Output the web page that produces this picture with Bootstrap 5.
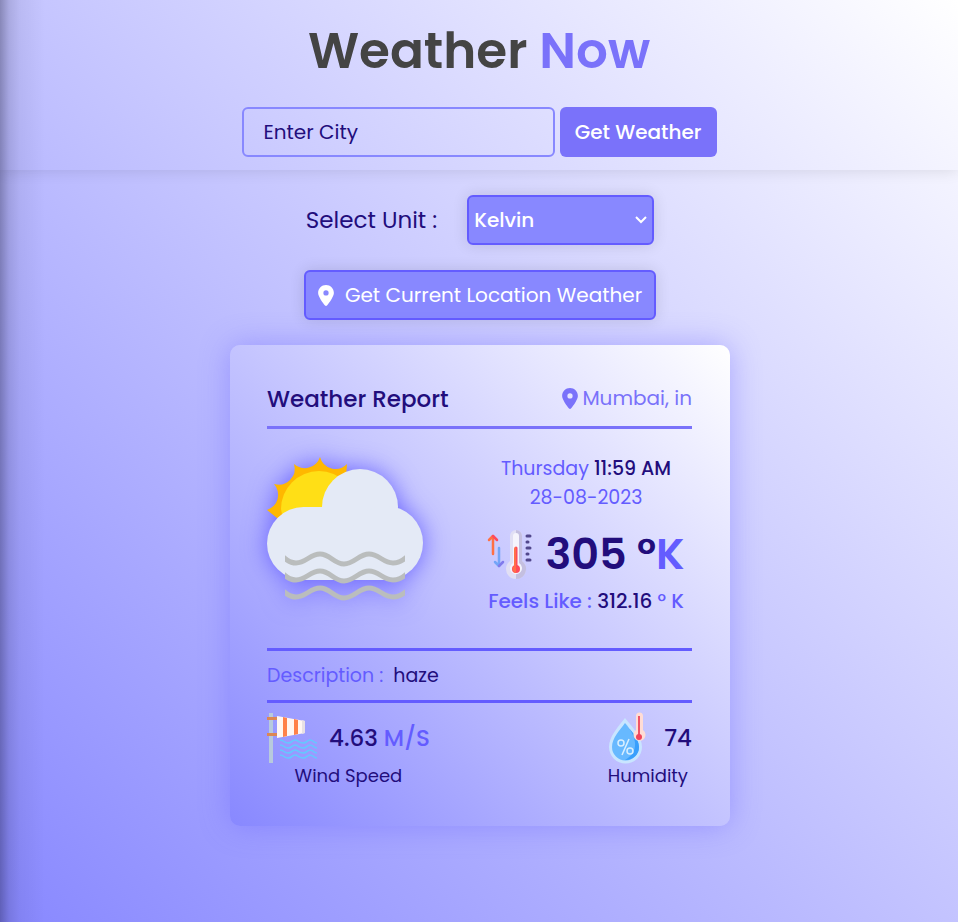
<!DOCTYPE html>
<html lang="en">
<head>
<meta charset="utf-8">
<meta name="viewport" content="width=device-width, initial-scale=1">
<title>Weather Now</title>
<link href="https://cdn.jsdelivr.net/npm/bootstrap@5.3.0/dist/css/bootstrap.min.css" rel="stylesheet">
<style>
  :root { --ink: #220d7c; --violet: #7a72fa; --strong: #645cff; --fill: #8888ff; }
  body {
    font-family: Poppins, Inter, "Open Sans", sans-serif;
    font-size: 20px;
    line-height: 30px;
    color: var(--ink);
    background: linear-gradient(to right, rgba(0, 0, 20, .3), rgba(0, 0, 20, .13) 9px, rgba(0, 0, 20, .05) 20px, transparent 45px), linear-gradient(to top right, #8888ff, #ffffff);
  }
  .site-head { padding: 13px 16px; box-shadow: 0 0 15px rgba(0, 0, 0, .12); clip-path: inset(0 0 -30px 0); }
  .brand-title { font-size: 50px; line-height: 76px; font-weight: 600; color: #444444; margin-bottom: 18px; }
  .tone-violet { color: var(--violet); }
  .tone-strong { color: var(--strong); }
  .tone-ink { color: var(--ink); }
  .weight-mid { font-weight: 500; }
  .search-row { max-width: 475px; gap: 5px; }
  .city-box, .city-box:focus { height: 50px; font-size: 20px; color: var(--ink); background: transparent; border: 2px solid var(--fill); border-radius: 6px; padding: 0 20px; }
  .city-box::placeholder { color: var(--ink); opacity: 1; }
  .go-btn { height: 50px; padding: 0 15px; font-size: 20px; font-weight: 500; color: #fff; background: var(--violet); border-radius: 6px; border: 0; }
  .unit-row { gap: 30px; }
  .unit-label { font-size: 23px; }
  .unit-pick { width: 187px; height: 50px; font-size: 20px; font-weight: 500; color: #fff; border: 2px solid var(--strong); border-radius: 6px; padding: 0 24px 0 5px;
    background: var(--fill) url("data:image/svg+xml,%3Csvg xmlns='http://www.w3.org/2000/svg' viewBox='0 0 12 8'%3E%3Cpath fill='none' stroke='white' stroke-width='2' d='M1 1l5 5 5-5'/%3E%3C/svg%3E") no-repeat right 5px center / 12px 8px;
    box-shadow: 0 0 15px rgba(0, 0, 0, .12); }
  .place-btn { height: 50px; padding: 0 12px; gap: 11px; font-size: 20px; color: #fff; background: var(--fill); border: 2px solid var(--strong); border-radius: 6px; box-shadow: 0 0 15px rgba(0, 0, 0, .12); }
  .main-stack { padding: 25px 16px 96px 18px; gap: 25px; }
  .report { max-width: 500px; padding: 38px 38px 38px 37px; border-radius: 10px; background: linear-gradient(to top right, #8888ff, #ffffff); box-shadow: 0 0 30px rgba(100, 92, 255, .4); }
  .report-top { height: 46px; border-bottom: 3px solid var(--violet); }
  .report-title { font-size: 23px; line-height: 32px; font-weight: 500; }
  .sky-row { height: 219px; padding-top: 25px; }
  .sky-art { filter: drop-shadow(0 0 12px rgba(90, 82, 255, .85)); margin-top: 3px; }
  .reading { width: 212px; }
  .day-text { font-size: 19px; line-height: 29px; }
  .degree-row { gap: 12px; margin: 12px 0 2px; height: 60px; }
  .degree { font-size: 43px; line-height: 60px; font-weight: 600; }
  .about-row { height: 55px; border-top: 3px solid var(--strong); border-bottom: 3px solid var(--strong); font-size: 19px; gap: 10px; }
  .stats-row { padding-top: 9px; }
  .stat-value { font-size: 23px; font-weight: 500; }
  .stat-name { font-size: 18px; line-height: 24px; }
</style>
<script src="https://cdn.jsdelivr.net/npm/bootstrap@5.3.0/dist/js/bootstrap.bundle.min.js" defer></script>
</head>
<body class="min-vh-100">
<header class="site-head">
  <h1 class="brand-title text-center">Weather <span class="tone-violet">Now</span></h1>
  <form class="search-row d-flex mx-auto">
    <input class="city-box form-control flex-fill" type="text" placeholder="Enter City" aria-label="Enter City">
    <button class="go-btn btn flex-shrink-0" type="button">Get Weather</button>
  </form>
</header>
<main class="main-stack d-flex flex-column align-items-center">
  <div class="unit-row d-flex align-items-center">
    <label class="unit-label" for="unit">Select Unit :</label>
    <select class="unit-pick form-select" id="unit"><option>Kelvin</option><option>Celsius</option><option>Fahrenheit</option></select>
  </div>
  <button class="place-btn btn d-flex align-items-center" type="button">
    <svg width="16" height="21" viewBox="0 0 384 512" fill="currentColor" aria-hidden="true"><path d="M215.700 499.200C267 435 384 279.400 384 192C384 86 298 0 192 0S0 86 0 192c0 87.400 117 243 168.300 307.200c12.300 15.300 35.100 15.300 47.400 0zM192 128a64 64 0 1 1 0 128 64 64 0 1 1 0-128z"/></svg>
    Get Current Location Weather
  </button>
  <section class="report w-100">
    <div class="report-top d-flex justify-content-between align-items-start">
      <h2 class="report-title mb-0">Weather Report</h2>
      <div class="tone-violet d-flex align-items-center gap-1">
        <svg width="16" height="21" viewBox="0 0 384 512" fill="currentColor" aria-hidden="true"><path d="M215.700 499.200C267 435 384 279.400 384 192C384 86 298 0 192 0S0 86 0 192c0 87.400 117 243 168.300 307.200c12.300 15.300 35.100 15.300 47.400 0zM192 128a64 64 0 1 1 0 128 64 64 0 1 1 0-128z"/></svg>
        <span>Mumbai, in</span>
      </div>
    </div>
    <div class="sky-row d-flex justify-content-between align-items-start">
      <svg class="sky-art overflow-visible" width="156" height="144" viewBox="17 17 156 144" aria-hidden="true">
        <path fill="#ffb800" d="M17 70A16 16 0 0 0 24 44A16 16 0 0 0 44 24A16 16 0 0 0 70 17A16 16 0 0 0 97 24L94 60 50 85 27 78Z"/>
        <path fill="#ffdf16" d="M107 69A38 38 0 0 0 31 69L33 80H107Z"/>
        <g fill="#e4eaf6"><circle cx="110" cy="67" r="38"/><path d="M53.500 67H137V140H53.500A36.500 36.500 0 0 1 53.500 67Z"/><circle cx="136" cy="103" r="37"/></g>
        <clipPath id="haze-edge"><path d="M35 100h120v70H35z"/></clipPath>
        <g fill="none" stroke="#babdbd" stroke-width="5" clip-path="url(#haze-edge)"><path id="wave" d="M31 115C36 120 40 123 46 123C56 123 60 114 70 114S84 124 94 124S109 114 119 114S133 123 143 123Q151 123 159 115"/><use href="#wave" y="17"/><use href="#wave" y="34"/></g>
      </svg>
      <div class="reading text-center">
        <div class="day-text tone-strong">Thursday <span class="tone-ink weight-mid">11:59 AM</span></div>
        <div class="day-text tone-strong">28-08-2023</div>
        <div class="degree-row d-flex align-items-center justify-content-center">
          <svg width="46" height="50" viewBox="0 0 46 50" aria-hidden="true">
            <g fill="none" stroke-width="2.500" stroke-linecap="round" stroke-linejoin="round"><path stroke="#ff7044" d="M6 25V8M2 11L6 7"/><path stroke="#ff4b5d" d="M6 7l4 4"/><path stroke="#73a5f8" d="M12 19v18M8 33l4 4"/><path stroke="#817bec" d="M12 37l4-4"/></g>
            <path fill="none" stroke="#51478c" stroke-width="3" stroke-linecap="round" d="M40 7h3M40 13h1M40 19h3M40 25h1M40 31h3"/>
            <path fill="#e1dff4" d="M23 7a6 6 0 0 1 12 0v25a10 10 0 1 1-12 0Z"/>
            <path fill="#c4bfe0" d="M29 1a6 6 0 0 1 6 6v25a10 10 0 0 1-6 18Z"/>
            <path fill="#f5f4fc" d="M26 7a3 3 0 0 1 6 0v27a6 6 0 1 1-6 0Z"/>
            <path stroke="#ff4b5b" stroke-width="3" stroke-linecap="round" d="M29 19v20"/><circle cx="29" cy="40" r="4" fill="#ff4a5b"/><path fill="#ff7048" d="M29 18q-2 0-2 2v17a4 4 0 0 0 2 7Z"/>
          </svg>
          <div class="degree text-nowrap">305 °<span class="tone-strong">K</span></div>
        </div>
        <div class="weight-mid text-nowrap tone-strong">Feels Like : <span class="tone-ink">312.16</span> ° K</div>
      </div>
    </div>
    <div class="about-row d-flex align-items-center"><span class="tone-strong">Description :</span><span>haze</span></div>
    <div class="stats-row d-flex justify-content-between">
      <div>
        <div class="d-flex align-items-center gap-2">
          <svg width="54" height="52" viewBox="0 0 54 52" aria-hidden="true">
            <path fill="#b8cadd" d="M2 1h4v50H2z"/><path fill="#dc8754" d="M0 5h10v3H0zM0 21h10v3H0z"/><path fill="#fff6f2" d="M10 4l28 5v12l-28 5z"/><path fill="#ff8149" d="M16 5l4 1v18l-4 1zM27 7l4 1v14l-4 1z"/><path fill="#e8e0e4" d="M35 8l3 1v12l-3 1z"/>
            <g fill="none" stroke="#62caff" stroke-width="1.500"><path id="ripple" d="M13 28c4 0 4 3 8 3s4-3 7-3 4 3 8 3 4-3 7-3 4 3 7 3"/><use href="#ripple" y="5"/><use href="#ripple" y="10"/><use href="#ripple" y="15"/></g>
          </svg>
          <div class="stat-value">4.63 <span class="tone-strong">M/S</span></div>
        </div>
        <div class="stat-name text-center">Wind Speed</div>
      </div>
      <div>
        <div class="d-flex align-items-center justify-content-between">
          <svg width="38" height="52" viewBox="0 0 38 52" aria-hidden="true">
            <path fill="#c9e5ff" d="M17 6C11 14 1 24 1 35a16 16 0 0 0 33 0C34 24 23 14 17 6Z"/><path fill="#67b9ff" d="M17 11C12 18 4 26 4 35a13 13 0 0 0 27 0C31 26 22 18 17 11Z"/><path fill="#399ffc" d="M17 11c5 7 14 15 14 24a13 13 0 0 1-14 13c14-8 13-22 0-37Z"/>
            <g fill="none" stroke="#d8efff" stroke-width="1.500"><path d="M21 27l-7 16"/><circle cx="13" cy="31" r="3"/><circle cx="22" cy="39" r="3"/></g>
            <path fill="#ffdcd5" d="M28 4a3 3 0 0 1 7 0v14a6 6 0 1 1-7 0Z"/><path stroke="#f05367" stroke-width="2" d="M31 4v20"/><circle cx="31" cy="25" r="3" fill="#f0445c"/>
          </svg>
          <div class="stat-value">74</div>
        </div>
        <div class="stat-name pe-1">Humidity</div>
      </div>
    </div>
  </section>
</main>
</body>
</html>
